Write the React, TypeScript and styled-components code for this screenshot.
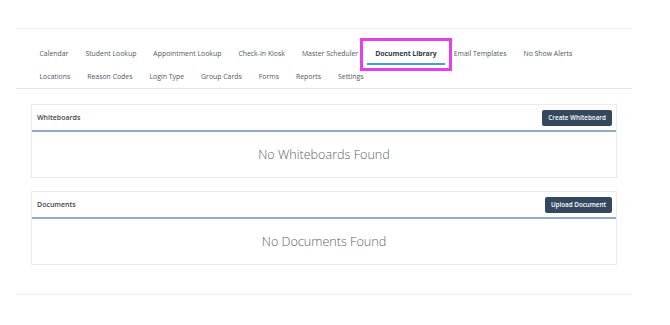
import React from "react";
import styled, { createGlobalStyle } from "styled-components";

const Global = createGlobalStyle`
  html, body { margin: 0; padding: 0; background: #fff; }
  body { font-family: "Open Sans", "Liberation Sans", sans-serif; }
`;

const Page = styled.div`
  width: 616px;
  margin-left: 16px;
  padding-top: 28px;
`;

const Nav = styled.nav`
  border-top: 1px solid #eeeeee;
  border-bottom: 1px solid #e6e6e6;
  padding: 17px 15px 0;
  height: 42px;
`;

const TabRow = styled.div`
  display: flex;
  flex-wrap: wrap;
`;

const Tab = styled.div<{ $active?: boolean }>`
  position: relative;
  box-sizing: border-box;
  padding: 3px 8.5px 0;
  height: ${(p) => (p.$active ? "19px" : "23px")};
  margin-bottom: ${(p) => (p.$active ? "4px" : "0")};
  font-size: 6.9px;
  line-height: 9px;
  font-weight: ${(p) => (p.$active ? 700 : 400)};
  letter-spacing: ${(p) => (p.$active ? "-0.05px" : "0")};
  color: ${(p) => (p.$active ? "#2f3b4a" : "#50565c")};
  white-space: nowrap;
  border-bottom: ${(p) => (p.$active ? "2px solid #4a9cc9" : "none")};
  ${(p) =>
    p.$active &&
    `
    &::after {
      content: "";
      position: absolute;
      left: -7px;
      right: -7px;
      top: -8px;
      bottom: -8px;
      border: 3px solid #e43fea;
    }
  `}
`;

const Content = styled.main`
  padding: 15px 15px 29px;
  border-bottom: 1px solid #eeeeee;
  display: flex;
  flex-direction: column;
  gap: 13px;
`;

const Card = styled.section`
  border: 1px solid #ececec;
  background: #fff;
`;

const CardHeader = styled.header`
  height: 27px;
  box-sizing: border-box;
  padding: 0 4px 0 5px;
  display: flex;
  align-items: center;
  justify-content: space-between;
  border-bottom: 2px solid #93abc4;
`;

const CardTitle = styled.h3`
  margin: 0;
  font-size: 7px;
  font-weight: 600;
  color: #444;
`;

const Button = styled.button`
  font-family: inherit;
  background: #34495e;
  color: #fff;
  border: none;
  border-radius: 2px;
  font-size: 6.3px;
  font-weight: 600;
  height: 16px;
  padding: 0 6px;
  cursor: pointer;
`;

const CardBody = styled.div`
  height: 45px;
  display: flex;
  align-items: center;
  justify-content: center;
  font-size: 12.6px;
  font-weight: 300;
  color: #616161;
`;

const row1 = [
  "Calendar",
  "Student Lookup",
  "Appointment Lookup",
  "Check-In Kiosk",
  "Master Scheduler",
  "Document Library",
  "Email Templates",
  "No Show Alerts",
];
const row2 = ["Locations", "Reason Codes", "Login Type", "Group Cards", "Forms", "Reports", "Settings"];

export default function App() {
  return (
    <>
      <Global />
      <Page>
        <Nav>
          <TabRow>
            {row1.map((t) => (
              <Tab key={t} $active={t === "Document Library"}>
                {t}
              </Tab>
            ))}
          </TabRow>
          <TabRow>
            {row2.map((t) => (
              <Tab key={t}>{t}</Tab>
            ))}
          </TabRow>
        </Nav>
        <Content>
          <Card>
            <CardHeader>
              <CardTitle>Whiteboards</CardTitle>
              <Button>Create Whiteboard</Button>
            </CardHeader>
            <CardBody>No Whiteboards Found</CardBody>
          </Card>
          <Card>
            <CardHeader>
              <CardTitle>Documents</CardTitle>
              <Button>Upload Document</Button>
            </CardHeader>
            <CardBody>No Documents Found</CardBody>
          </Card>
        </Content>
      </Page>
    </>
  );
}
